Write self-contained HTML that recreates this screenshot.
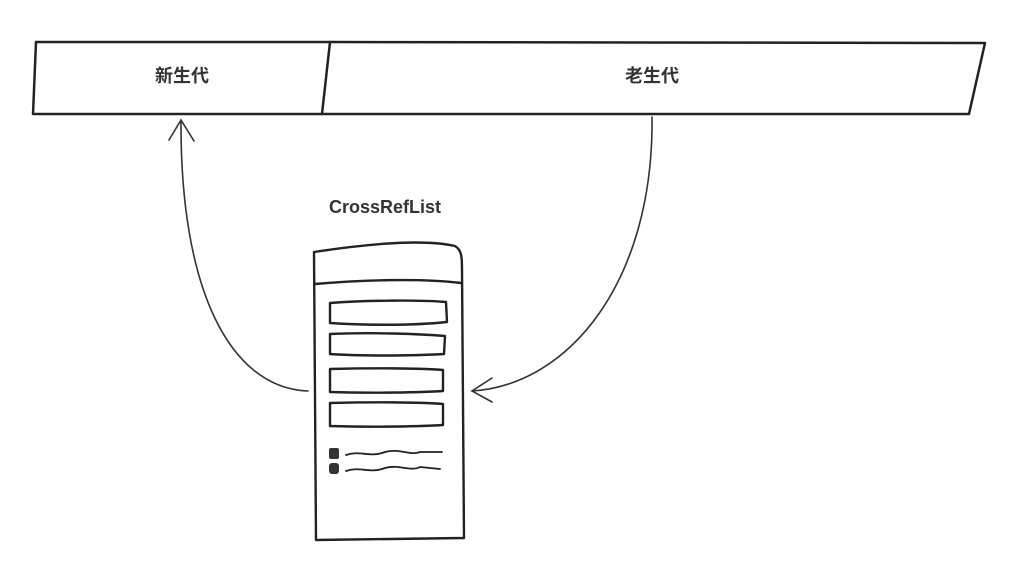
<!DOCTYPE html>
<html><head><meta charset="utf-8"><style>
html,body{margin:0;padding:0;background:#fff;width:1010px;height:572px;overflow:hidden}
svg{display:block}
text{font-family:"Liberation Sans","Noto Sans CJK SC",sans-serif;fill:#333}
</style></head><body>
<svg width="1010" height="572" viewBox="0 0 1010 572" xmlns="http://www.w3.org/2000/svg">
<g fill="none" stroke="#222" stroke-width="2.5" stroke-linecap="round" stroke-linejoin="round">
<path d="M36 42 L330 42 L985 43 L969 114 L322 114 L33 114 Z"/>
<path d="M330 42 L322 114"/>
</g>
<text x="182" y="82" font-size="18" font-weight="bold" text-anchor="middle">新生代</text>
<text x="652" y="82" font-size="18" font-weight="bold" text-anchor="middle">老生代</text>
<text x="385" y="213" font-size="18" font-weight="bold" text-anchor="middle">CrossRefList</text>
<g fill="none" stroke="#333" stroke-width="1.6" stroke-linecap="round">
<path d="M181 120 C180 290 230 388 308 391"/>
<path d="M169 140 L181 120 L194 141"/>
<path d="M652 117 C654 280 570 385 472 391"/>
<path d="M492 378 L472 391 L492 402"/>
</g>
<g fill="none" stroke="#222" stroke-width="2.4" stroke-linecap="round" stroke-linejoin="round">
<path d="M314 252 C360 245 420 238 455 246 C462 250 462 258 462 270 L464 538 L316 540 Z"/>
<path d="M315 284 C360 280 420 278 461 283"/>
<path d="M330 303 C370 300 420 300 446 302 L447 322 C410 326 360 325 330 323 Z"/>
<path d="M330 334 C370 332 420 334 445 336 L444 354 C410 356 360 356 330 354 Z"/>
<path d="M330 369 C370 368 420 368 443 370 L443 391 C410 393 360 393 330 392 Z"/>
<path d="M330 403 C370 402 420 402 443 404 L443 425 C410 427 360 427 330 426 Z"/>
<path d="M346 455 C360 450 370 458 385 452 C400 448 410 456 420 452 L442 452" stroke-width="1.8"/>
<path d="M346 471 C360 466 370 474 385 468 C400 464 410 472 420 467 L440 469" stroke-width="1.8"/>
</g>
<rect x="329" y="448" width="10" height="11" rx="2" fill="#333"/>
<rect x="329" y="463" width="10" height="11" rx="3" fill="#333"/>
</svg>
</body></html>
